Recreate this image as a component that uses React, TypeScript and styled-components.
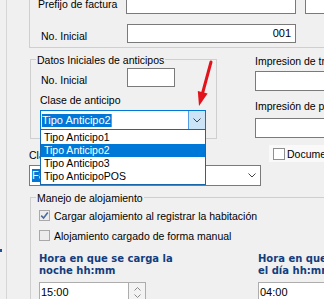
import React from 'react';
import styled, { createGlobalStyle } from 'styled-components';

const GlobalStyle = createGlobalStyle`
  html, body {
    margin: 0;
    padding: 0;
    background: #f0f0f0;
  }
  body {
    font-family: 'Liberation Sans', Arial, sans-serif;
    font-size: 10.5px;
    color: #000;
  }
`;

const Window = styled.div`
  position: relative;
  display: flex;
  width: 324px;
  height: 299px;
  overflow: hidden;
  background: #f0f0f0;
`;

const LeftRail = styled.div`
  flex: 0 0 7px;
  border-right: 1px solid #d6d6d6;
  padding-top: 249px;
  box-sizing: border-box;
`;

const RailMark = styled.div`
  width: 2px;
  height: 3px;
  background: #1d4f9c;
`;

const Main = styled.div`
  flex: 1;
  min-width: 0;
  padding-left: 22px;
  display: flex;
  flex-direction: column;
`;

const TopGroup = styled.div`
  margin-top: -8px;
  padding: 2px 0 4px 8px;
  border-left: 1px solid #cfcfcf;
  border-bottom: 1px solid #cfcfcf;
  display: flex;
  flex-direction: column;
  gap: 10px;
`;

const Row = styled.div<{ $align?: 'center' | 'flex-end'; $indent?: number; $gap?: number }>`
  display: flex;
  align-items: ${({ $align }) => $align ?? 'center'};
  margin-top: ${({ $gap }) => $gap ?? 0}px;
  margin-left: ${({ $indent }) => $indent ?? 0}px;
`;

const Label = styled.span<{ $w?: number }>`
  flex-shrink: 0;
  display: block;
  width: ${({ $w }) => ($w ? `${$w}px` : 'auto')};
  line-height: 13px;
  white-space: nowrap;
`;

const Field = styled.div<{ $w: number; $h: number; $right?: boolean; $light?: boolean }>`
  box-sizing: border-box;
  flex-shrink: 0;
  width: ${({ $w }) => $w}px;
  height: ${({ $h }) => $h}px;
  border: 1px solid ${({ $light }) => ($light ? '#adadad' : '#7a7a7a')};
  background: #fff;
  padding: ${({ $right }) => ($right ? '0 4px 0 0' : '0 0 0 1px')};
  text-align: ${({ $right }) => ($right ? 'right' : 'left')};
  font-size: 11px;
  line-height: ${({ $h }) => $h - 2}px;
`;

const SideField = styled(Field)`
  margin-left: 9px;
`;

const MiddleGrid = styled.div`
  display: grid;
  grid-template-columns: 226px 1fr;
`;

const LeftCol = styled.div`
  display: flex;
  flex-direction: column;
  align-items: flex-start;
`;

const Group = styled.div<{ $w: number; $h: number; $top: number }>`
  box-sizing: border-box;
  flex-shrink: 0;
  margin: ${({ $top }) => $top}px 0 0 1px;
  width: ${({ $w }) => $w}px;
  height: ${({ $h }) => $h}px;
  border: 1px solid #cfcfcf;
  display: flex;
  flex-direction: column;
  align-items: flex-start;
`;

const GroupTitle = styled.div`
  margin: -6px 0 0 5px;
  padding: 0 1px;
  background: #f0f0f0;
  line-height: 13px;
  white-space: nowrap;
`;

const StackLabel = styled(Label)<{ $gap: number; $indent?: number }>`
  margin-top: ${({ $gap }) => $gap}px;
  margin-left: ${({ $indent }) => $indent ?? 0}px;
`;

const ComboWrap = styled.div<{ $w: number; $focused?: boolean; $gap: number; $indent?: number }>`
  position: relative;
  box-sizing: border-box;
  flex-shrink: 0;
  margin-top: ${({ $gap }) => $gap}px;
  margin-left: ${({ $indent }) => $indent ?? 0}px;
  width: ${({ $w }) => $w}px;
  height: ${({ $focused }) => ($focused ? 20 : 21)}px;
  border: 1px solid ${({ $focused }) => ($focused ? '#0078d7' : '#7a7a7a')};
  background: #fff;
  display: flex;
  align-items: center;
  padding-left: ${({ $focused }) => ($focused ? 1 : 2)}px;
`;

const Selection = styled.span`
  background: #0078d7;
  color: #fff;
  font-size: 11px;
  line-height: 13px;
  white-space: nowrap;
`;

const Caret = styled.span`
  width: 1px;
  height: 13px;
  background: #f07a1a;
`;

const Spacer = styled.span`
  flex: 1;
`;

const DropButton = styled.span<{ $active?: boolean }>`
  box-sizing: border-box;
  width: 17px;
  height: 100%;
  display: flex;
  align-items: center;
  justify-content: center;
  background: ${({ $active }) => ($active ? '#cce4f7' : 'transparent')};
  border-left: 1px solid ${({ $active }) => ($active ? '#569de5' : 'transparent')};
`;

const DropList = styled.ul`
  position: absolute;
  top: 100%;
  left: -1px;
  z-index: 3;
  box-sizing: border-box;
  width: calc(100% + 2px);
  margin: 0;
  padding: 1px 0;
  list-style: none;
  background: #fff;
  border: 1px solid #1767ae;
`;

const DropItem = styled.li<{ $selected?: boolean }>`
  height: 13px;
  line-height: 13px;
  padding-left: 3px;
  white-space: nowrap;
  background: ${({ $selected }) => ($selected ? '#0078d7' : 'transparent')};
  color: ${({ $selected }) => ($selected ? '#fff' : '#000')};
`;

const RightCol = styled.div`
  min-width: 0;
  padding-top: 7px;
  display: flex;
  flex-direction: column;
  align-items: flex-start;
`;

const FieldGap = styled.div<{ $gap: number }>`
  margin-top: ${({ $gap }) => $gap}px;
`;

const DocRow = styled.div`
  margin: 7px 0 0 14px;
  padding: 2px 0 2px 4px;
  height: 13px;
  width: 120px;
  background: #f9f9f9;
  display: flex;
  align-items: center;
  gap: 2px;
  white-space: nowrap;
`;

const Box = styled.span<{ $size: number; $muted?: boolean }>`
  box-sizing: border-box;
  flex-shrink: 0;
  width: ${({ $size }) => $size}px;
  height: ${({ $size }) => $size}px;
  border: 1px solid ${({ $muted }) => ($muted ? '#a9a9a9' : '#8f8f8f')};
  background: ${({ $muted }) => ($muted ? '#ececec' : '#fff')};
  display: flex;
  align-items: center;
  justify-content: center;
`;

const CheckRow = styled.div<{ $gap: number }>`
  margin: ${({ $gap }) => $gap}px 0 0 8px;
  height: 13px;
  display: flex;
  align-items: center;
  gap: 4px;
  white-space: nowrap;
`;

const TimeGrid = styled.div`
  margin: 11px 0 0 8px;
  display: grid;
  grid-template-columns: 150px 150px;
  column-gap: 69px;
`;

const TimeCaption = styled.div`
  font-family: 'DejaVu Sans', Verdana, sans-serif;
  font-weight: bold;
  font-size: 10px;
  line-height: 12px;
  color: #133d7d;
`;

const TimeInput = styled.div`
  margin-top: 5px;
  display: flex;
`;

const Spinner = styled.div`
  box-sizing: border-box;
  width: 17px;
  height: 21px;
  border: 1px solid #adadad;
  border-left: none;
  background: #f3f3f3;
  display: flex;
  flex-direction: column;
  align-items: center;
  justify-content: space-around;
  padding: 2px 0;
`;

const Annotation = styled.svg`
  position: absolute;
  left: 188px;
  top: 56px;
  pointer-events: none;
`;

const Chevron = () => (
  <svg width="8" height="5" viewBox="0 0 8 5">
    <path d="M0.5 0.5 L4 4 L7.5 0.5" fill="none" stroke="#444" strokeWidth="1" />
  </svg>
);

const SpinArrow = ({ up }: { up?: boolean }) => (
  <svg width="7" height="4" viewBox="0 0 7 4">
    <path d={up ? 'M0.5 3.5 L3.5 0.5 L6.5 3.5' : 'M0.5 0.5 L3.5 3.5 L6.5 0.5'} fill="none" stroke="#8a8a8a" strokeWidth="1" />
  </svg>
);

const Tick = () => (
  <svg width="9" height="9" viewBox="0 0 9 9">
    <path d="M1.2 4.6 L3.6 7 L7.8 1.6" fill="none" stroke="#4b6c9e" strokeWidth="1.6" />
  </svg>
);

const anticipos = ['Tipo Anticipo1', 'Tipo Anticipo2', 'Tipo Anticipo3', 'Tipo AnticipoPOS'];

export default function App() {
  return (
    <>
      <GlobalStyle />
      <Window>
        <LeftRail>
          <RailMark />
        </LeftRail>
        <Main>
          <TopGroup>
            <Row>
              <Label $w={88}>Prefijo de factura</Label>
              <Field $w={170} $h={20} />
              <SideField $w={60} $h={20} />
            </Row>
            <Row $align="flex-end" $indent={3}>
              <Label $w={86}>No. Inicial</Label>
              <Field $w={169} $h={19} $right>
                001
              </Field>
            </Row>
          </TopGroup>

          <MiddleGrid>
            <LeftCol>
              <Group $w={187} $h={80} $top={11}>
                <GroupTitle>Datos Iniciales de anticipos</GroupTitle>
                <Row $align="flex-end" $indent={10} $gap={1}>
                  <Label $w={86}>No. Inicial</Label>
                  <Field $w={48} $h={19} />
                </Row>
                <StackLabel $gap={7} $indent={9}>
                  Clase de anticipo
                </StackLabel>
                <ComboWrap $w={166} $gap={3} $indent={9} $focused>
                  <Selection>Tipo Anticipo2</Selection>
                  <Caret />
                  <Spacer />
                  <DropButton $active>
                    <Chevron />
                  </DropButton>
                  <DropList>
                    {anticipos.map((item) => (
                      <DropItem key={item} $selected={item === 'Tipo Anticipo2'}>
                        {item}
                      </DropItem>
                    ))}
                  </DropList>
                </ComboWrap>
              </Group>
              <StackLabel $gap={10}>Clasificación</StackLabel>
            </LeftCol>

            <RightCol>
              <Label>Impresion de traslado</Label>
              <FieldGap $gap={3}>
                <Field $w={120} $h={20} />
              </FieldGap>
              <StackLabel $gap={9}>Impresión de pre-factura</StackLabel>
              <FieldGap $gap={5}>
                <Field $w={120} $h={20} />
              </FieldGap>
              <DocRow>
                <Box $size={12} />
                <span>Documento electrónico</span>
              </DocRow>
            </RightCol>
          </MiddleGrid>

          <ComboWrap $w={232} $gap={3}>
            <Selection>Factura</Selection>
            <Spacer />
            <DropButton>
              <Chevron />
            </DropButton>
          </ComboWrap>

          <Group $w={400} $h={200} $top={11}>
            <GroupTitle>Manejo de alojamiento</GroupTitle>
            <CheckRow $gap={4}>
              <Box $size={11} $muted>
                <Tick />
              </Box>
              <span>Cargar alojamiento al registrar la habitación</span>
            </CheckRow>
            <CheckRow $gap={7}>
              <Box $size={11} $muted />
              <span>Alojamiento cargado de forma manual</span>
            </CheckRow>
            <TimeGrid>
              <div>
                <TimeCaption>Hora en que se carga la noche hh:mm</TimeCaption>
                <TimeInput>
                  <Field $w={90} $h={21} $light>
                    15:00
                  </Field>
                  <Spinner>
                    <SpinArrow up />
                    <SpinArrow />
                  </Spinner>
                </TimeInput>
              </div>
              <div>
                <TimeCaption>Hora en que se descarga el día hh:mm</TimeCaption>
                <TimeInput>
                  <Field $w={90} $h={21} $light>
                    04:00
                  </Field>
                </TimeInput>
              </div>
            </TimeGrid>
          </Group>
        </Main>

        <Annotation width="28" height="54" viewBox="0 0 28 54">
          <line x1="23" y1="6" x2="14.6" y2="37" stroke="#e3131b" strokeWidth="3" strokeLinecap="round" />
          <polygon points="11,50 19.6,37.6 9.8,35" fill="#e3131b" />
        </Annotation>
      </Window>
    </>
  );
}
